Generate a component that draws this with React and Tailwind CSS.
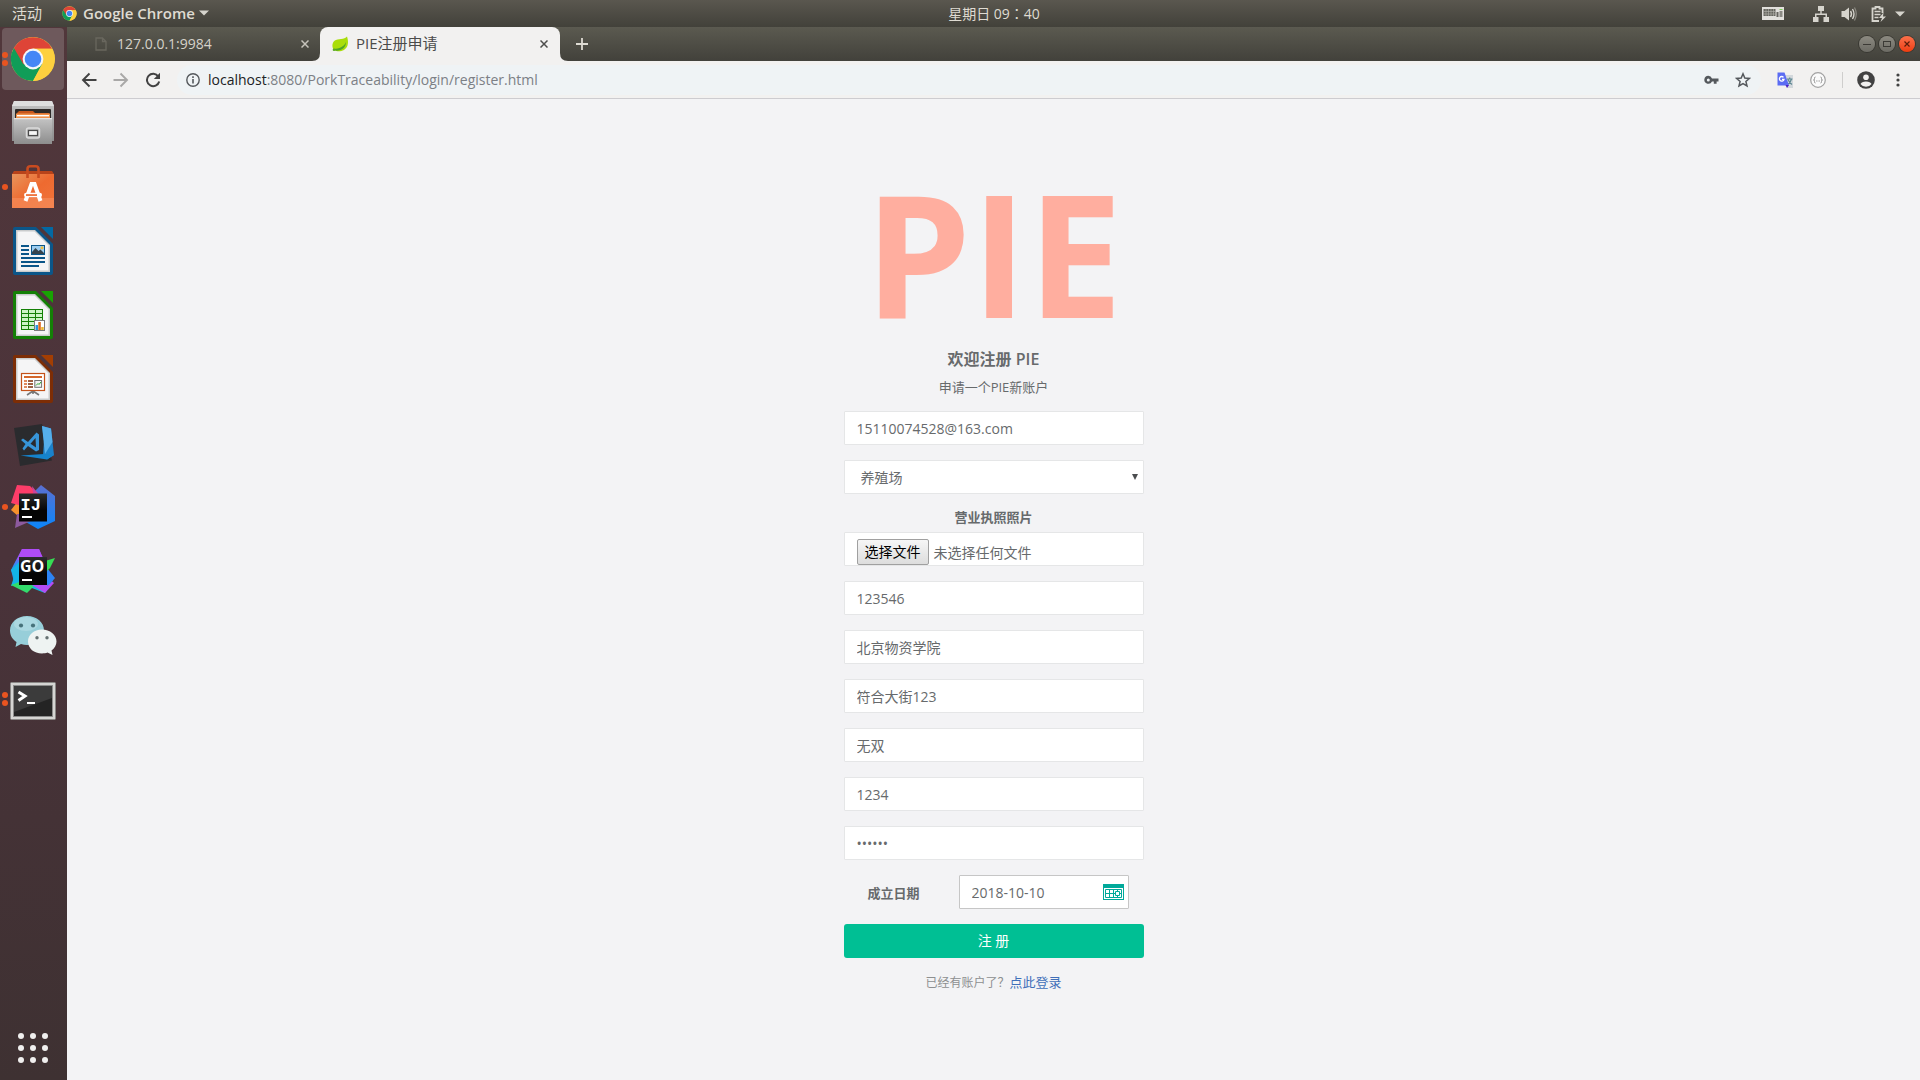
import React from "react";

const uiFont = "font-['Open_Sans','Noto_Sans_CJK_SC',sans-serif]";

function ChromeLogo({ className }) {
  return (
    <svg viewBox="0 0 46 46" className={className} aria-hidden="true">
      <circle cx="23" cy="23" r="22" fill="#fdd03f" />
      <path d="M23 23 L3.9 12 A22 22 0 0 0 23 45 L32.5 28.5 Z" fill="#109d58" />
      <path d="M3.9 12 A22 22 0 0 1 42.1 12.8 L23 12.8 L13.5 28.5 Z" fill="#de4437" />
      <path d="M23 12.8 H42.1 A22 22 0 0 1 23 45 L32 28 Z" fill="#fdd03f" />
      <circle cx="23" cy="23" r="10.4" fill="#f4f6f8" />
      <circle cx="23" cy="23" r="8.3" fill="#4486f6" />
    </svg>
  );
}

function FilesIcon() {
  return (
    <svg viewBox="0 0 44 44" className="size-11" aria-hidden="true">
      <defs>
        <linearGradient id="cab" x1="0" y1="0" x2="0" y2="1">
          <stop offset="0" stopColor="#c4c4c4" />
          <stop offset="1" stopColor="#8d8d8d" />
        </linearGradient>
      </defs>
      <path d="M3 0 H41 L43 5 V40 H1 V5 Z" fill="url(#cab)" />
      <path d="M3 0 H41 L43 5 H1 Z" fill="#dedede" />
      <rect x="4" y="8" width="36" height="11" rx="1" fill="#2e2a28" />
      <path d="M8 10 H22 L24 12 H38 V18 H6 V12 Z" fill="#c8571c" />
      <rect x="5" y="12.5" width="34" height="5" fill="#f0914a" />
      <rect x="6" y="14" width="32" height="1.4" fill="#fff" />
      <path d="M3 17 H41 V43 H3 Z" fill="url(#cab)" />
      <path d="M3 17 H41 V18.2 H3 Z" fill="#e6e6e6" />
      <rect x="15.500" y="27" width="13" height="10" rx="2" fill="#b5b5b5" stroke="#dadada" strokeWidth="1.500" />
      <rect x="17.500" y="29.500" width="9" height="5" fill="#f6f6f6" stroke="#4b4b4b" strokeWidth="1.200" />
    </svg>
  );
}

function SoftwareIcon() {
  return (
    <svg viewBox="0 0 44 44" className="size-11" aria-hidden="true">
      <defs>
        <linearGradient id="bag" x1="0" y1="0" x2="1" y2="1">
          <stop offset="0" stopColor="#e8955c" />
          <stop offset="0.500" stopColor="#ee6a30" />
          <stop offset="1" stopColor="#f0743b" />
        </linearGradient>
      </defs>
      <path d="M3 6 H41 L43 9 H1 Z" fill="#b8431a" />
      <rect x="1" y="9" width="42" height="34" fill="url(#bag)" />
      <rect x="1" y="33" width="42" height="10" fill="#f58b5a" opacity="0.700" />
      <path d="M16.500 13 V4 Q16.500 1.300 19.500 1.300 H24.500 Q27.500 1.300 27.500 4 V13" fill="none" stroke="#c94b20" strokeWidth="2.600" />
      <path d="M14.500 36 L20.500 19 H23.500 L29.500 36" fill="none" stroke="#fff" strokeWidth="4" />
      <rect x="13" y="27.800" width="18" height="4.400" rx="2.200" fill="#fff" />
      <rect x="15" y="29.200" width="11" height="1.700" fill="#ee6a30" />
    </svg>
  );
}

function OfficeDoc({ edge, fold, children }) {
  return (
    <svg viewBox="0 0 40 48" className="h-12 w-10" aria-hidden="true">
      <path d="M2 0 H23 L40 17 V46 Q40 48 38 48 H2 Q0 48 0 46 V2 Q0 0 2 0 Z" fill={edge} />
      <path d="M3 3 H22 L37 18 V45 H3 Z" fill="#c9cbcc" />
      <path d="M4.500 4.500 H21.500 L35.500 18.500 V43.500 H4.500 Z" fill="#f5f5f6" />
      <path d="M28 0 H40 V12 Z" fill={fold} />
      {children}
    </svg>
  );
}

function WriterIcon() {
  return (
    <OfficeDoc edge="#0b5689" fold="#0369a3">
      <g fill="#0b5689">
        <rect x="8" y="18" width="8" height="2" />
        <rect x="8" y="22" width="8" height="2" />
        <rect x="8" y="26" width="8" height="2" />
        <rect x="8" y="30" width="24" height="2" />
        <rect x="8" y="34" width="24" height="2" />
        <rect x="8" y="38" width="18" height="2" />
        <rect x="18" y="18" width="14" height="10" />
      </g>
      <rect x="19" y="19" width="12" height="8" fill="#9dcdf0" />
      <path d="M19 27 V25 L22.500 21 L25.500 24 L27.500 22.500 L31 26 V27 Z" fill="#36444d" />
      <circle cx="29" cy="20.800" r="1.500" fill="#f0bd3a" />
    </OfficeDoc>
  );
}

function CalcIcon() {
  return (
    <OfficeDoc edge="#148006" fold="#18a303">
      <rect x="8" y="18" width="22" height="21" fill="#148006" />
      <g fill="#ccf4c6">
        {[19, 23, 27, 31, 35].map((y) =>
          [9, 16, 23].map((x) => <rect key={`${x}-${y}`} x={x} y={y} width="6" height="3" />)
        )}
      </g>
      <rect x="21.500" y="29.500" width="10" height="10" fill="#fff" stroke="#7c7c7c" />
      <rect x="22.500" y="34" width="2.500" height="5" fill="#2a97dd" />
      <rect x="25.300" y="31" width="2.500" height="8" fill="#dd6a20" />
      <rect x="28.200" y="36" width="2.500" height="3" fill="#edb62f" />
    </OfficeDoc>
  );
}

function ImpressIcon() {
  return (
    <OfficeDoc edge="#7d2d05" fold="#a33e03">
      <path d="M20 36 L14 40 M20 36 L26 40 M20 35 V39" stroke="#777" strokeWidth="1.600" />
      <rect x="8.500" y="18.500" width="23" height="17" fill="#fff" stroke="#c4521a" strokeWidth="1.200" />
      <rect x="11" y="21" width="18" height="2" fill="#d5672c" />
      <path d="M11 26 H14 M11 29 H14 M11 32 H14" stroke="#d5672c" strokeWidth="1.500" />
      <path d="M15 26 H20 M15 29 H20 M15 32 H20" stroke="#7d2d05" strokeWidth="1.700" />
      <rect x="21.800" y="25.500" width="6.800" height="6.800" fill="#f3f3f3" stroke="#717171" />
      <path d="M23 30.500 L25 28.500 L26 29.500 L28 27" stroke="#29a329" fill="none" />
    </OfficeDoc>
  );
}

function CodeIcon() {
  return (
    <svg viewBox="0 0 44 44" className="mt-1 size-11" aria-hidden="true">
      <path d="M3 5 L31 1 L41 37.500 L9 43 Z" fill="#2a2b2e" />
      <path d="M31 3 L40 5.500 L43 32 L36 36.500 L32 32 L33 18 Z" fill="#1c82cb" />
      <path d="M31 3 L40 5.500 L41.500 19 L34 31 Z" fill="#55aeea" />
      <path d="M9.500 32.500 L33 31 L43 32 L36 36.500 Z" fill="#1583cc" />
      <path fillRule="evenodd" d="M10 17 L12 15.500 L17 19 L25.500 9.500 L28 11.500 V27 L25 28.500 L17 23 L13 27.500 L11.500 25.500 L14.500 21 Z M24.500 15 L19.500 20.800 L25 24.500 Z" fill="#3795d8" />
    </svg>
  );
}

function IdeaIcon() {
  return (
    <svg viewBox="0 0 46 46" className="size-[46px]" aria-hidden="true">
      <defs>
        <linearGradient id="ija" x1="0" y1="0" x2="0" y2="1">
          <stop offset="0" stopColor="#5b6fd0" />
          <stop offset="1" stopColor="#0a86fb" />
        </linearGradient>
        <linearGradient id="ijbox" x1="0" y1="0" x2="0" y2="1">
          <stop offset="0" stopColor="#2c2c2d" />
          <stop offset="0.600" stopColor="#050505" />
        </linearGradient>
      </defs>
      <path d="M24 8 L31 1 L45 12 V37 L28 45 L14 37 Z" fill="url(#ija)" />
      <path d="M1 26 L8 17 L14 34 L8 32 Z" fill="#f7922d" />
      <path d="M7 30 L22 30 L21 37 L5 44 Z" fill="#8d5a9e" />
      <path d="M7 1 L20 2 L30 12 L12 22 L1 19 Z" fill="#fd3d69" />
      <path d="M22 2 L30 12 L24 14 Z" fill="#c9459a" />
      <rect x="9" y="9.500" width="28" height="28" fill="url(#ijbox)" />
      <text x="10.500" y="26" fill="#fff" fontFamily="Liberation Mono, monospace" fontWeight="700" fontSize="17">IJ</text>
      <rect x="12" y="32" width="10" height="2" fill="#fff" />
    </svg>
  );
}

function GolandIcon() {
  return (
    <svg viewBox="0 0 46 46" className="size-[46px]" aria-hidden="true">
      <defs>
        <linearGradient id="goa" x1="0" y1="0" x2="0" y2="1">
          <stop offset="0" stopColor="#a94ef5" />
          <stop offset="0.400" stopColor="#2d8df3" />
          <stop offset="1" stopColor="#10c3d9" />
        </linearGradient>
      </defs>
      <path d="M12 1 H29 L34 14 L43 32 L35 45 L14 37 L4 34 L1 22 L4 16 Z" fill="url(#goa)" />
      <path d="M12 1 H29 L34 12 H7 Z" fill="#ae4cf6" />
      <path d="M1 22 L9 14 V36 L1 38 L4 29 Z" fill="#12b5e6" />
      <path d="M1 37 L12 33 L24 38 L17 45 Z" fill="#32dc6c" />
      <path d="M22 37 L38 30 L44 35 L35 45 Z" fill="#b44cf4" />
      <path d="M37 20 L45 30 L40 36 L37 38 Z" fill="#2d84f5" />
      <path d="M35 13 L45 10 L40 20 L36 24 Z" fill="#36dd54" />
      <rect x="9" y="9" width="28" height="28" fill="url(#ijbox)" />
      <text x="10" y="24" fill="#fff" fontFamily="Open Sans, sans-serif" fontWeight="700" fontSize="16">GO</text>
      <rect x="12" y="31" width="10" height="2" fill="#fff" />
    </svg>
  );
}

function WeChatIcon() {
  return (
    <svg viewBox="0 0 48 44" className="h-11 w-12" aria-hidden="true">
      <path d="M18 3 C8 3 1 9.500 1 17.500 C1 22.500 3.500 26.500 7.500 29 L6.500 34 L12 31 C14 31.700 16 32 18 32 C28 32 35 25.500 35 17.500 C35 9.500 28 3 18 3 Z" fill="#97ced9" />
      <ellipse cx="17" cy="11" rx="12" ry="7" fill="#b3dde4" opacity="0.700" />
      <circle cx="12" cy="12.500" r="2.100" fill="#47727b" />
      <circle cx="24" cy="12.500" r="2.100" fill="#47727b" />
      <path d="M33 16.500 C25 16.500 19 21.500 19 28.500 C19 35.500 25 40.500 33 40.500 C35 40.500 37 40.200 38.500 39.600 L43.500 42 L42.500 37.500 C45.500 35.500 47.500 32 47.500 28.500 C47.500 21.500 41 16.500 33 16.500 Z" fill="#eef3f2" />
      <circle cx="28" cy="24.800" r="1.700" fill="#667273" />
      <circle cx="38" cy="24.800" r="1.700" fill="#667273" />
    </svg>
  );
}

function TerminalIcon() {
  return (
    <svg viewBox="0 0 46 38" className="mt-1 h-[38px] w-[46px]" aria-hidden="true">
      <rect x="0.500" y="0.500" width="45" height="37" rx="1" fill="#d5d5d3" stroke="#8a8886" />
      <rect x="3.500" y="3.500" width="39" height="31" fill="#242424" stroke="#8d8d8c" />
      <path d="M4 4 H42 V16 L4 30 Z" fill="#3b3b3b" />
      <path d="M8.500 10 L15 14 L8.500 18.500" fill="none" stroke="#fff" strokeWidth="3" />
      <rect x="17" y="20" width="8" height="2" fill="#fff" />
    </svg>
  );
}

const dock = [
  { name: "Google Chrome", icon: <ChromeLogo className="size-[46px]" />, dots: 2, active: true },
  { name: "Files", icon: <FilesIcon />, dots: 0 },
  { name: "Ubuntu Software", icon: <SoftwareIcon />, dots: 1 },
  { name: "LibreOffice Writer", icon: <WriterIcon />, dots: 0 },
  { name: "LibreOffice Calc", icon: <CalcIcon />, dots: 0 },
  { name: "LibreOffice Impress", icon: <ImpressIcon />, dots: 0 },
  { name: "Visual Studio Code", icon: <CodeIcon />, dots: 0 },
  { name: "IntelliJ IDEA", icon: <IdeaIcon />, dots: 1 },
  { name: "GoLand", icon: <GolandIcon />, dots: 0 },
  { name: "WeChat", icon: <WeChatIcon />, dots: 0 },
  { name: "Terminal", icon: <TerminalIcon />, dots: 2 },
];

function Dock() {
  return (
    <nav aria-label="Dock" className="flex w-[67px] shrink-0 flex-col bg-linear-to-b from-[#51373b] via-[#4a333a] to-[#3e3132]">
      {dock.map((app) => (
        <button key={app.name} type="button" aria-label={app.name} className="relative flex h-16 w-full items-center justify-center pr-px">
          {app.active && <span className="absolute inset-y-px left-0.5 w-[62px] rounded bg-[#6e595c]" />}
          <span className="relative">{app.icon}</span>
          <span className="absolute inset-y-0 left-0.5 flex flex-col justify-center gap-0.5">
            {Array.from({ length: app.dots }, (_, i) => (
              <span key={i} className="size-1.5 rounded-full bg-[#e95420]" />
            ))}
          </span>
        </button>
      ))}
      <button type="button" aria-label="Show Applications" className="mt-auto flex h-16 w-full items-center justify-center pr-px">
        <span className="grid grid-cols-3 gap-1.5">
          {Array.from({ length: 9 }, (_, i) => (
            <span key={i} className="size-1.5 rounded-full bg-[#f0efee]" />
          ))}
        </span>
      </button>
    </nav>
  );
}

function Caret() {
  return (
    <svg viewBox="0 0 10 6" className="h-1.5 w-2.5" aria-hidden="true">
      <path d="M0 0.500 H10 L5 5.500 Z" fill="#d6d4cd" />
    </svg>
  );
}

function SystemBar() {
  return (
    <header className="grid h-[27px] shrink-0 grid-cols-[1fr_auto_1fr] items-center bg-linear-to-b from-[#5a574f] to-[#42413a] text-sm text-[#dfdbd2]">
      <div className="flex items-center pl-3">
        <button type="button" className="text-[15px]">活动</button>
        <button type="button" className="ml-5 flex items-center text-[15px] font-semibold">
          <ChromeLogo className="mr-1.5 size-[15px]" />
          <span className="mr-1">Google Chrome</span>
          <Caret />
        </button>
      </div>
      <time className="pl-[68px] font-['Open_Sans','Noto_Sans_CJK_TC',sans-serif]">星期日 09：40</time>
      <div className="flex items-center justify-end pr-[15px]">
        <svg viewBox="0 0 22 14" className="mr-[29px] h-3.5 w-[22px]" aria-hidden="true">
          <rect width="22" height="13" fill="#e2e0dc" />
          <rect x="1.500" y="2" width="12" height="7" fill="#66655f" />
          <path d="M1.500 4.500 H13.500 M1.500 7 H13.500 M4 2 V9 M6.500 2 V9 M9 2 V9 M11.500 2 V9" stroke="#b5b3ad" strokeWidth="0.600" />
          <rect x="14.500" y="5" width="2" height="5" fill="#66655f" />
          <rect x="17.500" y="4" width="3" height="6" fill="#8b8a84" />
          <rect x="17.500" y="2" width="3" height="1" fill="#7ed35e" />
        </svg>
        <svg viewBox="0 0 16 16" className="mr-3 size-4" fill="#d6d4cd" aria-hidden="true">
          <path d="M5 0 H11 V5 H8.700 V7.500 H14 V11 H16 V16 H10.500 V11 H12.500 V9 H3.500 V11 H5.500 V16 H0 V11 H2 V7.500 H7.300 V5 H5 Z" />
        </svg>
        <svg viewBox="0 0 16 16" className="mr-3.5 size-4" aria-hidden="true">
          <path d="M0.500 5 H3.500 L8 1.500 V14.500 L3.500 11 H0.500 Z" fill="#d6d4cd" />
          <path d="M9.500 5 Q11.500 8 9.500 11 M11.500 3 Q14.500 8 11.500 13" fill="none" stroke="#d6d4cd" strokeWidth="1.400" />
          <path d="M13.500 1.500 Q17 8 13.500 14.500" fill="none" stroke="#8c8a82" strokeWidth="1.200" />
        </svg>
        <svg viewBox="0 0 15 16" className="mr-[9px] h-4 w-[15px]" aria-hidden="true">
          <path d="M11.500 7 V2.500 H8.500 V1 H4.500 V2.500 H1.500 V15 H8" fill="none" stroke="#d6d4cd" strokeWidth="1.800" />
          <path d="M3.500 5.500 H9.500 M3.500 8.500 H9.500 M3.500 11.500 H7.500" stroke="#d6d4cd" strokeWidth="1.600" />
          <path d="M12.500 6.500 L8 12 H11 L9.500 16 L15 10.500 H12 Z" fill="#d6d4cd" />
        </svg>
        <Caret />
      </div>
    </header>
  );
}

function CloseX({ color }) {
  return (
    <svg viewBox="0 0 8 8" className="size-2" aria-hidden="true">
      <path d="M0.500 0.500 L7.500 7.500 M7.500 0.500 L0.500 7.500" stroke={color} strokeWidth="1.500" />
    </svg>
  );
}

function TabStrip() {
  return (
    <div className="flex h-[34px] shrink-0 items-stretch bg-linear-to-b from-[#5b5a50] to-[#42413b] text-sm">
      <div className="flex w-[253px] items-center pr-[11px] pl-7">
        <svg viewBox="0 0 12 14" className="h-3.5 w-3" aria-hidden="true">
          <path d="M1 1 H7.500 L11 4.500 V13 H1 Z M7.500 1 V4.500 H11" fill="none" stroke="#69675e" strokeWidth="1.300" />
        </svg>
        <span className="ml-2.5 text-[#d5d2ca]">127.0.0.1:9984</span>
        <button type="button" aria-label="关闭 127.0.0.1:9984" className="ml-auto"><CloseX color="#c6c3bb" /></button>
      </div>
      <div className="relative flex w-60 items-center rounded-t-lg bg-[#f2f1f0] pr-3 pl-3">
        <svg viewBox="0 0 8 8" className="absolute bottom-0 -left-2 size-2" aria-hidden="true">
          <path d="M8 0 V8 H0 Q8 8 8 0 Z" fill="#f2f1f0" />
        </svg>
        <svg viewBox="0 0 8 8" className="absolute -right-2 bottom-0 size-2" aria-hidden="true">
          <path d="M0 0 V8 H8 Q0 8 0 0 Z" fill="#f2f1f0" />
        </svg>
        <svg viewBox="0 0 16 16" className="size-4" aria-hidden="true">
          <path d="M15 0.500 C12.500 4 6 2 2.500 4.800 C-0.200 7 -0.200 11.500 2 14 C6 16.500 13.500 15.500 15.500 9.500 C16.500 6 15.800 2.800 15 0.500 Z" fill="#a9dd0a" />
          <path d="M2 13 C7 12.800 12 11 14 6 C14 11.500 9.500 15.300 3.200 14.600 Z" fill="#4fa526" />
          <circle cx="2" cy="13.800" r="1.300" fill="#5aa82a" />
        </svg>
        <span className="ml-2 text-[15px] text-[#4b4b4a]">PIE注册申请</span>
        <button type="button" aria-label="关闭 PIE注册申请" className="ml-auto"><CloseX color="#4d4d4c" /></button>
      </div>
      <button type="button" aria-label="新标签页" className="ml-4 self-center">
        <svg viewBox="0 0 12 12" className="size-3" aria-hidden="true">
          <path d="M6 0 V12 M0 6 H12" stroke="#dedbd3" strokeWidth="1.800" />
        </svg>
      </button>
      <div className="ml-auto flex items-center gap-1 pr-[5px]">
        <button type="button" aria-label="最小化" className="flex size-4 items-center justify-center rounded-full bg-linear-to-b from-[#8c8a81] to-[#6c6b64] ring-1 ring-[#3a3933]">
          <svg viewBox="0 0 8 8" className="size-2" aria-hidden="true"><path d="M0 4.500 H8" stroke="#3b3a35" /></svg>
        </button>
        <button type="button" aria-label="最大化" className="flex size-4 items-center justify-center rounded-full bg-linear-to-b from-[#8c8a81] to-[#6c6b64] ring-1 ring-[#3a3933]">
          <svg viewBox="0 0 8 8" className="size-2" aria-hidden="true"><rect x="0.500" y="1.500" width="7" height="5" fill="none" stroke="#3b3a35" /></svg>
        </button>
        <button type="button" aria-label="关闭" className="flex size-4 items-center justify-center rounded-full bg-linear-to-b from-[#fb7049] to-[#ee3b0a] ring-1 ring-[#3a3933]">
          <svg viewBox="0 0 8 8" className="size-2" aria-hidden="true"><path d="M1.500 1.500 L6.500 6.500 M6.500 1.500 L1.500 6.500" stroke="#5c1d0a" strokeWidth="1.200" /></svg>
        </button>
      </div>
    </div>
  );
}

function Toolbar() {
  return (
    <div className="flex h-[38px] shrink-0 items-center border-b border-[#cdccd0] bg-[#f2f1f0] pr-5 pl-3.5">
      <button type="button" aria-label="后退">
        <svg viewBox="0 0 16 16" className="size-4" aria-hidden="true"><path d="M15.500 8 H2 M8.500 1.500 L2 8 L8.500 14.500" fill="none" stroke="#424242" strokeWidth="1.900" /></svg>
      </button>
      <button type="button" aria-label="前进" className="ml-4">
        <svg viewBox="0 0 16 16" className="size-4" aria-hidden="true"><path d="M0.500 8 H14 M7.500 1.500 L14 8 L7.500 14.500" fill="none" stroke="#a9a8a7" strokeWidth="1.900" /></svg>
      </button>
      <button type="button" aria-label="重新加载" className="ml-4">
        <svg viewBox="0 0 16 16" className="size-4" aria-hidden="true">
          <path d="M13.300 4.500 A6.200 6.200 0 1 0 14.200 9.500" fill="none" stroke="#424242" strokeWidth="2" />
          <path d="M15 0.800 V7 H8.800 Z" fill="#424242" />
        </svg>
      </button>
      <div className="ml-4 flex h-[30px] min-w-0 flex-1 items-center rounded-full bg-[#eff3f5] pr-2.5 pl-[9px]">
        <svg viewBox="0 0 14 14" className="size-3.5 shrink-0" aria-hidden="true">
          <circle cx="7" cy="7" r="6.200" fill="none" stroke="#54585c" strokeWidth="1.400" />
          <path d="M7 6 V10.500 M7 3.300 V4.900" stroke="#54585c" strokeWidth="1.600" />
        </svg>
        <div className="ml-2 min-w-0 flex-1 truncate text-sm text-[#7c8085]">
          <span className="text-[#202124]">localhost</span>:8080/PorkTraceability/login/register.html
        </div>
        <button type="button" aria-label="密码" className="mr-4">
          <svg viewBox="0 0 15 10" className="h-2.5 w-[15px]" aria-hidden="true">
            <path fillRule="evenodd" d="M4.300 0.800 A4 4 0 1 0 8 6.400 H9.800 V8.800 H12.600 V6.400 H14.500 V3.400 H8 A4 4 0 0 0 4.300 0.800 Z M4.300 3.400 A1.500 1.500 0 1 1 4.300 6.400 A1.500 1.500 0 1 1 4.300 3.400 Z" fill="#54585c" />
          </svg>
        </button>
        <button type="button" aria-label="收藏">
          <svg viewBox="0 0 16 16" className="size-4" aria-hidden="true">
            <path d="M8 1.800 L9.800 6 L14.400 6.400 L10.900 9.400 L12 13.900 L8 11.500 L4 13.900 L5.100 9.400 L1.600 6.400 L6.200 6 Z" fill="none" stroke="#54585c" strokeWidth="1.500" />
          </svg>
        </button>
      </div>
      <button type="button" aria-label="翻译" className="ml-4">
        <svg viewBox="0 0 16 16" className="size-4" aria-hidden="true">
          <path d="M7 3 H16 V16 H10 Z" fill="#d3d8dc" />
          <path d="M10 7 H15.500 M12.700 5.500 V7 M14.500 7 Q13.500 11 10.500 12.500 M11 7.500 Q12.500 11 15 12.500" fill="none" stroke="#5f8892" strokeWidth="1.200" />
          <path d="M0.500 0.500 H7.500 L12 13.500 H0.500 Z" fill="#5b6cf3" />
          <path d="M8.500 13 H12 L10 16 Z" fill="#4a1fc4" />
          <path d="M6.500 5.300 A2.300 2.300 0 1 0 7 7.300 H5" fill="none" stroke="#fff" strokeWidth="1.300" />
        </svg>
      </button>
      <button type="button" aria-label="JSON" className="ml-[17px]">
        <svg viewBox="0 0 16 16" className="size-4" aria-hidden="true">
          <circle cx="8" cy="8" r="7.300" fill="#fbfbfb" stroke="#a2a2a2" strokeWidth="1.200" />
          <path d="M5.500 5 Q4.300 5 4.500 6.500 T3.500 8 Q4.700 8 4.500 9.500 T5.500 11 M10.500 5 Q11.700 5 11.500 6.500 T12.500 8 Q11.300 8 11.500 9.500 T10.500 11" fill="none" stroke="#8a8a8a" strokeWidth="0.900" />
          <path d="M6.200 9 H10" stroke="#8a8a8a" strokeDasharray="0.900 0.500" strokeWidth="0.900" />
        </svg>
      </button>
      <span className="ml-4 h-4 w-px bg-[#cfcecd]" />
      <button type="button" aria-label="账户" className="ml-3.5">
        <svg viewBox="0 0 18 18" className="size-[18px]" aria-hidden="true">
          <circle cx="9" cy="9" r="8.800" fill="#424242" />
          <circle cx="9" cy="6.300" r="2.800" fill="#f2f1f0" />
          <path d="M3.500 13 Q4.500 10.500 9 10.500 Q13.500 10.500 14.500 13 Q12.500 15.800 9 15.800 Q5.500 15.800 3.500 13 Z" fill="#f2f1f0" />
        </svg>
      </button>
      <button type="button" aria-label="菜单" className="ml-[21px]">
        <svg viewBox="0 0 4 14" className="h-3.5 w-1" fill="#424242" aria-hidden="true">
          <circle cx="2" cy="2" r="1.600" /><circle cx="2" cy="7" r="1.600" /><circle cx="2" cy="12" r="1.600" />
        </svg>
      </button>
    </div>
  );
}

const field = "h-[34px] w-full rounded-[1px] border border-[#e5e6e7] bg-white px-3 text-sm text-[#676a6c] outline-none";

function CalendarIcon() {
  return (
    <svg viewBox="0 0 21 16" className="h-4 w-[21px]" aria-hidden="true">
      <rect width="21" height="16" fill="#00a99a" />
      <rect x="1" y="4" width="19" height="11" fill="#fff" />
      <path d="M2.500 5.500 H18.500 V13.500 H2.500 Z M6.500 5.500 V13.500 M10.500 5.500 V13.500 M2.500 9.500 H18.500" fill="none" stroke="#00a99a" />
      <path d="M12.500 7.500 H16.500 V11.500 H12.500 Z" fill="#fff" stroke="#00a99a" />
      <path d="M14.500 5.500 V7.500 M14.500 11.500 V13.500" stroke="#00a99a" />
    </svg>
  );
}

function RegisterPage() {
  return (
    <main className="flex-1 overflow-auto bg-[#f3f3f5] pt-[68px] text-[13px] text-[#676a6c]">
      <div className="mx-auto w-[300px] text-center">
        <h1 className="text-[170px] leading-[170px] font-bold text-[#ffae9f]">PIE</h1>
        <h3 className="mt-3 text-base leading-5 font-semibold">欢迎注册 PIE</h3>
        <p className="mt-2 leading-5">申请一个PIE新账户</p>
        <form className="mt-3.5 flex flex-col gap-[15px]" onSubmit={(e) => e.preventDefault()}>
          <input aria-label="邮箱" type="email" defaultValue="15110074528@163.com" className={field} />
          <div className="relative">
            <select aria-label="企业类型" className="block h-[34px] w-full appearance-none rounded-[1px] border border-[#e5e6e7] bg-white px-4 pt-0.5 text-sm text-[#676a6c] outline-none">
              <option>养殖场</option>
            </select>
            <svg viewBox="0 0 6 6" className="pointer-events-none absolute top-3.5 right-1.5 size-1.5" aria-hidden="true">
              <path d="M0 0 H6 L3 6 Z" fill="#4b4d4f" />
            </svg>
          </div>
          <div>
            <label htmlFor="license" className="mb-[7px] block leading-4 font-bold">营业执照照片</label>
            <label htmlFor="license" className="flex h-[34px] items-start rounded-[1px] border border-[#e5e6e7] bg-white px-3 pt-1.5 text-sm leading-6">
              <input id="license" type="file" className="sr-only" />
              <span className="w-[72px] rounded-xs border border-[#a0a0a0] bg-linear-to-b from-[#f6f6f6] to-[#dddddd] text-black">选择文件</span>
              <span className="ml-[5px] pt-0.5">未选择任何文件</span>
            </label>
          </div>
          <input aria-label="营业执照编号" defaultValue="123546" className={field} />
          <input aria-label="企业名称" defaultValue="北京物资学院" className={field} />
          <input aria-label="地址" defaultValue="符合大街123" className={field} />
          <input aria-label="法人" defaultValue="无双" className={field} />
          <input aria-label="电话" defaultValue="1234" className={field} />
          <input aria-label="密码" type="password" defaultValue="123456" className={field} />
          <div className="flex items-center">
            <label htmlFor="founded" className="w-1/3 pt-1 font-bold">成立日期</label>
            <div className="relative mx-[15px] min-w-0 flex-1">
              <input id="founded" defaultValue="2018-10-10" className="block h-[34px] w-full rounded-[1px] border border-[#c6c6c6] bg-white px-3 text-sm text-[#676a6c] outline-none" />
              <button type="button" aria-label="选择日期" className="absolute top-[9px] right-[5px]"><CalendarIcon /></button>
            </div>
          </div>
          <button type="submit" className="h-[34px] w-full rounded-[3px] bg-[#00bf94] text-sm text-white">注 册</button>
        </form>
        <p className="mt-3.5 leading-5">
          <small className="text-xs text-[#8d8f90]">已经有账户了？</small>
          <a href="#login" className="text-[#3f6fb9]">点此登录</a>
        </p>
      </div>
    </main>
  );
}

export default function App() {
  return (
    <div className={`flex h-screen flex-col overflow-hidden ${uiFont}`}>
      <SystemBar />
      <div className="flex min-h-0 flex-1">
        <Dock />
        <div className="flex min-w-0 flex-1 flex-col">
          <TabStrip />
          <Toolbar />
          <RegisterPage />
        </div>
      </div>
    </div>
  );
}
